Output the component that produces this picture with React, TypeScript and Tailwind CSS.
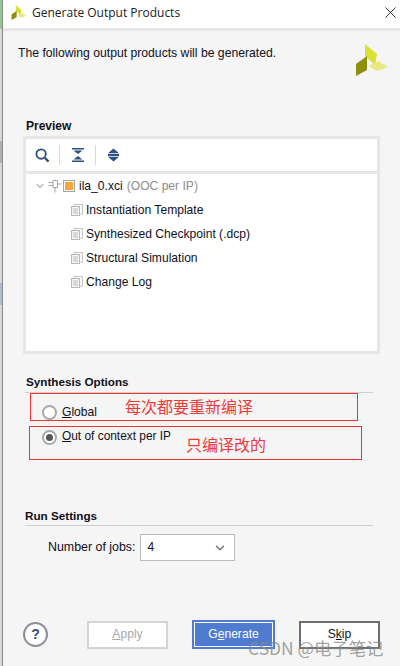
import { ChevronDown } from "lucide-react"

function XilinxLogo({ className }: { className: string }) {
  return (
    <svg viewBox="0 0 32 32" className={className}>
      <polygon points="9,0 21,10 19,21 9,12" fill="#dbe034" />
      <polygon points="0,20 11,12 11,26 0,32" fill="#8f8f0c" />
      <polygon points="13,22 22,17 32,23 21,27" fill="#e6ea80" />
    </svg>
  )
}

function FileIcon() {
  return (
    <svg viewBox="0 0 12 12" className="h-3 w-3 shrink-0" fill="none">
      <rect x="3.5" y="0.5" width="8" height="9.5" fill="#fff" stroke="#c4c4c4" />
      <rect x="0.5" y="2.5" width="8" height="9" fill="#f5f5f5" stroke="#b8b8b8" />
      <path d="M2 5h5M2 7h5M2 9h5" stroke="#bdbdbd" />
    </svg>
  )
}

function TreeRow({ label }: { label: string }) {
  return (
    <div className="flex h-6 items-center gap-[3px] pl-[45px]">
      <FileIcon />
      <span>{label}</span>
    </div>
  )
}

export default function App() {
  return (
    <div className="relative flex h-[666px] w-[400px] overflow-hidden bg-[#f5f5f5] font-['Liberation_Sans',sans-serif] text-[12.1px] text-[#10101c]">
      {/* Window behind the dialog */}
      <div className="flex w-[3px] shrink-0 flex-col border-r border-[#8a8a8a] bg-[#d8d8d8]">
        <div className="h-[29px] bg-[#8fc98f]" />
        <div className="mt-[112px] h-[22px] bg-[#b0b0b0]" />
        <div className="mt-[120px] h-[22px] bg-[#aebbd4]" />
      </div>

      <div className="flex min-w-0 flex-1 flex-col">
        {/* Title bar */}
        <div className="flex h-[31px] shrink-0 items-center border-b-[3px] border-[#e6e6e6] bg-white pb-[3px] pl-[8px] pr-[4px]">
          <XilinxLogo className="h-[15px] w-[16px]" />
          <span className="ml-[5px] flex-1 font-['Open_Sans',sans-serif] text-[12px] text-[#222]">Generate Output Products</span>
          <svg viewBox="0 0 12 12" className="h-[11px] w-[11px]" fill="none" stroke="#222" strokeWidth="1">
            <path d="M0.5 0.5l11 11M11.5 0.5l-11 11" />
          </svg>
        </div>

        {/* Header message */}
        <div className="flex h-[48px] shrink-0 items-start justify-between pl-[15px] pr-[12px]">
          <p className="mt-[14px] text-[12.2px] leading-[17px]">The following output products will be generated.</p>
          <XilinxLogo className="mt-[13px] h-[32px] w-[32px]" />
        </div>

        {/* Preview */}
        <h2 className="ml-[23px] mt-[40px] text-[12px] font-bold leading-[14px]">Preview</h2>
        <div className="ml-[20px] mr-[20px] mt-[3px] flex h-[218px] flex-col border-[3px] border-[#e6e6e6] bg-white">
          <div className="flex h-[35px] shrink-0 items-center border-b-[3px] border-[#e6e6e6] pl-[9px]">
            <svg viewBox="0 0 16 16" className="h-[15px] w-[15px]" fill="none" stroke="#2f4f80">
              <circle cx="6.5" cy="6.5" r="5" strokeWidth="2" />
              <path d="M10.5 10.5l4 4" strokeWidth="2.4" />
            </svg>
            <div className="ml-[9px] h-[20px] w-px bg-[#d8d8d8]" />
            <svg viewBox="0 0 14 14" className="ml-[11px] h-[14px] w-[14px]" fill="#2f4f80">
              <path d="M1 0h12v1.5H1zM2.5 2.5h9L7 6zM2.5 11.5h9L7 8zM1 12.5h12V14H1z" />
            </svg>
            <div className="ml-[10px] h-[20px] w-px bg-[#d8d8d8]" />
            <svg viewBox="0 0 14 14" className="ml-[11px] h-[14px] w-[13px]" fill="#2f4f80">
              <path d="M7 0l6 5H1zM1 6h12v2H1zM1 9h12l-6 5z" />
            </svg>
          </div>
          <div className="leading-[14px]">
            <div className="flex h-6 items-center pl-[8px]">
              <ChevronDown className="h-[12px] w-[12px] text-[#777]" strokeWidth={2} />
              <svg viewBox="0 0 14 14" className="ml-[2px] h-[14px] w-[14px]" fill="none" stroke="#a5a5a5">
                <path d="M5 1.5h4.5v7H5zM0.5 3.5H5M0.5 6.5H5M7 8.5v5M9.5 5h4" />
              </svg>
              <span className="ml-[1px] flex h-[12px] w-[12px] items-center justify-center border border-[#a5a5a5] bg-white">
                <span className="h-[8px] w-[8px] bg-[#f7a738]" />
              </span>
              <span className="ml-[4px]">ila_0.xci</span>
              <span className="ml-[4px] text-[#8d8d8d]">(OOC per IP)</span>
            </div>
            <TreeRow label="Instantiation Template" />
            <TreeRow label="Synthesized Checkpoint (.dcp)" />
            <TreeRow label="Structural Simulation" />
            <TreeRow label="Change Log" />
          </div>
        </div>

        {/* Synthesis Options */}
        <h2 className="ml-[23px] mt-[21px] text-[11.7px] font-bold leading-[14px]">Synthesis Options</h2>
        <div className="ml-[22px] mr-[27px] mt-[3px] border-t border-[#d0d0d0]" />
        <div className="ml-[39px] mt-[11px] flex h-[16px] items-center gap-[5px]">
          <span className="h-[15px] w-[15px] rounded-full border-2 border-[#a8a8a8] bg-white" />
          <span><u>G</u>lobal</span>
        </div>
        <div className="ml-[39px] mt-[9px] flex h-[16px] items-center gap-[5px]">
          <span className="flex h-[15px] w-[15px] items-center justify-center rounded-full border-2 border-[#a8a8a8] bg-white">
            <span className="h-[7px] w-[7px] rounded-full bg-[#555]" />
          </span>
          <span className="text-[11.9px]"><u>O</u>ut of context per IP</span>
        </div>

        {/* Run Settings */}
        <h2 className="ml-[22px] mt-[64px] text-[11.7px] font-bold leading-[14px]">Run Settings</h2>
        <div className="ml-[22px] mr-[27px] mt-[2px] border-t border-[#d0d0d0]" />
        <div className="ml-[45px] mt-[8px] flex items-center gap-[5px]">
          <span className="text-[12.4px]">Number of <span className="underline decoration-[#10101c]">j</span>obs:</span>
          <div className="flex h-[27px] w-[95px] items-center justify-between border border-[#bcbcbc] bg-white pl-[6px] pr-[7px]">
            <span>4</span>
            <ChevronDown className="h-[14px] w-[14px] text-[#777]" strokeWidth={2.6} />
          </div>
        </div>

        {/* Footer buttons */}
        <div className="mt-[59px] flex items-center pl-[20px]">
          <div className="flex h-[25px] w-[25px] items-center justify-center rounded-full border-2 border-[#8b8f99] bg-white text-[14px] font-bold text-[#2f4f80]">?</div>
          <div className="ml-[39px] flex h-[28px] w-[81px] items-center justify-center border-2 border-[#d4d4d4] bg-white text-[#a9a9a9]"><span><u>A</u>pply</span></div>
          <div className="ml-[24px] flex h-[29px] w-[83px] items-center justify-center border-2 border-[#4f7bd1] bg-[#4f7bd1] text-white outline outline-1 -outline-offset-3 outline-white"><span>G<u>e</u>nerate</span></div>
          <div className="ml-[24px] flex h-[28px] w-[81px] items-center justify-center border-2 border-[#6e6e6e] bg-white"><span>S<u>k</u>ip</span></div>
        </div>
      </div>

      {/* Red annotations drawn on the screenshot */}
      <div className="absolute left-[30px] top-[393px] h-[28px] w-[328px] border border-[#e33] font-['Noto_Sans_CJK_SC',sans-serif] text-[16px] leading-[20px] text-[#f03a3a]">
        <span className="absolute left-[94px] top-[2px] whitespace-nowrap">每次都要重新编译</span>
      </div>
      <div className="absolute left-[29px] top-[426px] h-[34px] w-[333px] border border-[#e33] font-['Noto_Sans_CJK_SC',sans-serif] text-[16px] leading-[20px] text-[#f03a3a]">
        <span className="absolute left-[156px] top-[7px] whitespace-nowrap">只编译改的</span>
      </div>

      {/* CSDN watermark */}
      <span className="absolute left-[248px] top-[638px] whitespace-nowrap font-['Noto_Sans_CJK_SC',sans-serif] text-[17.4px] leading-[20px] text-[#8a8a8a]/80">CSDN @电子笔记</span>
    </div>
  )
}
